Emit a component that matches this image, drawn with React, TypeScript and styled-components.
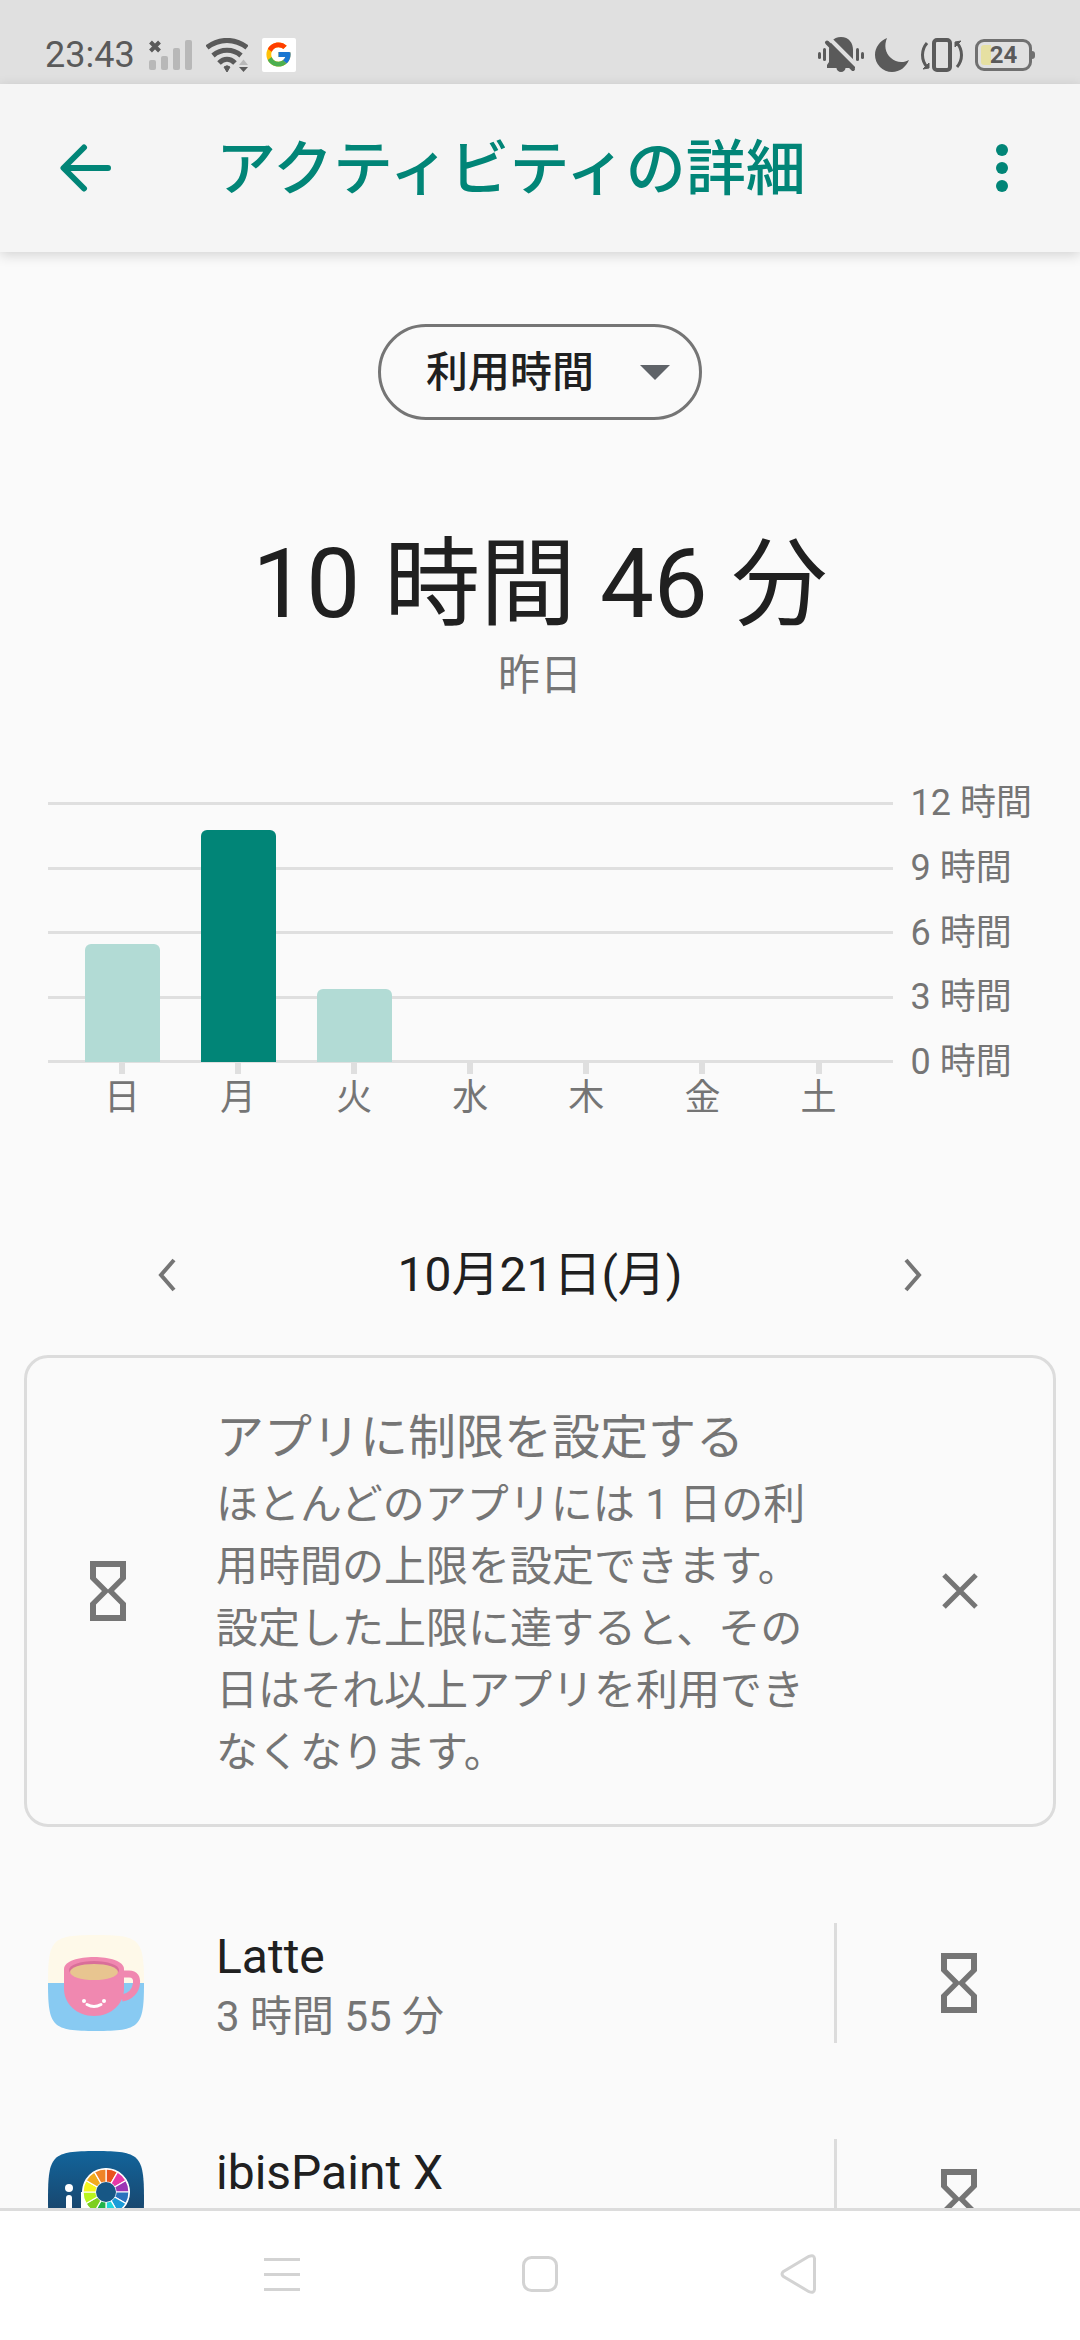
import React from 'react';
import styled, { createGlobalStyle } from 'styled-components';
import { FcGoogle } from 'react-icons/fc';

const color = {
  page: '#fafafa',
  header: '#f5f5f5',
  status: '#e0e0e0',
  statusIcon: '#5a5a5a',
  statusFaint: '#b8b8b8',
  teal: '#018577',
  tealLight: '#b2dbd5',
  text: '#202020',
  muted: '#757575',
  line: '#dfdfdf',
  navIcon: '#d3d3d3',
};

const GlobalStyle = createGlobalStyle`
  *, *::before, *::after { box-sizing: border-box; }
  body {
    margin: 0;
    background: ${color.page};
    color: ${color.text};
    font-family: Roboto, "Noto Sans CJK JP", sans-serif;
  }
  h1, h2, p, ul, ol, figure { margin: 0; padding: 0; }
  ul, ol { list-style: none; }
  svg { display: block; flex: none; }
`;

const Screen = styled.div`
  display: flex;
  flex-direction: column;
  height: 100vh;
`;

const StatusBar = styled.div`
  display: flex;
  flex: none;
  align-items: center;
  justify-content: space-between;
  height: 84px;
  padding: 25px 45px 0;
  background: ${color.status};
  color: ${color.statusIcon};
`;

const StatusGroup = styled.div<{ $gap: number }>`
  display: flex;
  align-items: center;
  gap: ${(p) => p.$gap}px;
`;

const Clock = styled.time`
  font-size: 36px;
  line-height: 36px;
`;

const GoogleTile = styled.span`
  display: grid;
  place-items: center;
  width: 34px;
  height: 34px;
  border-radius: 2px;
  background: #fff;
`;

const Battery = styled.span`
  display: flex;
  align-items: center;
`;

const BatteryBody = styled.span`
  display: grid;
  grid-template-columns: 10px 1fr;
  align-items: center;
  width: 57px;
  height: 32px;
  padding: 3px;
  border: 3px solid #707070;
  border-radius: 9px;
`;

const BatteryCharge = styled.span`
  grid-area: 1 / 1;
  height: 20px;
  border-radius: 3px 0 0 3px;
  background: #e6e0a2;
`;

const BatteryLevel = styled.span`
  grid-area: 1 / 1 / 2 / 3;
  font-size: 24px;
  font-weight: 700;
  line-height: 20px;
  text-align: center;
`;

const BatteryTip = styled.span`
  width: 3px;
  height: 8px;
  border-radius: 0 3px 3px 0;
  background: #707070;
`;

const Header = styled.header`
  position: relative;
  z-index: 1;
  display: grid;
  flex: none;
  grid-template-columns: 171px 1fr 156px;
  align-items: center;
  height: 168px;
  background: ${color.header};
  box-shadow: 0 3px 12px rgba(0, 0, 0, 0.16);
`;

const IconButton = styled.button`
  display: grid;
  place-items: center;
  min-width: 96px;
  min-height: 96px;
  padding: 0;
  border: 0;
  background: none;
  color: inherit;
  cursor: pointer;
`;

const Title = styled.h1`
  padding: 4px 0 0 45px;
  color: ${color.teal};
  font-size: 60px;
  font-weight: 500;
  line-height: 80px;
  white-space: nowrap;
`;

const Main = styled.main`
  flex: 1;
  min-height: 0;
  overflow-y: auto;
  scrollbar-width: none;
`;

const Picker = styled.div`
  display: grid;
  width: 324px;
  margin: 72px auto 0;
`;

const PickerSelect = styled.select`
  grid-area: 1 / 1;
  height: 96px;
  padding: 0 80px 0 45px;
  border: 3px solid ${color.muted};
  border-radius: 48px;
  appearance: none;
  background: transparent;
  color: ${color.text};
  font-family: inherit;
  font-size: 42px;
  font-weight: 500;
  cursor: pointer;
`;

const PickerArrow = styled.svg`
  grid-area: 1 / 1;
  place-self: center end;
  margin-right: 32px;
  pointer-events: none;
`;

const Summary = styled.section`
  margin-top: 108px;
  text-align: center;
`;

const Total = styled.h2`
  font-size: 96px;
  font-weight: 400;
  line-height: 112px;
`;

const TotalDay = styled.p`
  margin-top: 8px;
  color: ${color.muted};
  font-size: 42px;
  line-height: 56px;
`;

const Chart = styled.figure`
  display: grid;
  grid-template-columns: 1fr auto;
  column-gap: 18px;
  margin-top: 79px;
  padding: 0 48px;
  color: ${color.muted};
  font-size: 36px;
`;

const Plot = styled.div`
  display: grid;
  height: 261px;
  margin-top: 19px;
`;

const GridLines = styled.div`
  display: flex;
  grid-area: 1 / 1;
  flex-direction: column;
  justify-content: space-between;
`;

const GridLine = styled.span`
  height: 3px;
  background: ${color.line};
`;

const Bars = styled.div`
  display: grid;
  grid-area: 1 / 1;
  grid-template-columns: repeat(7, 1fr);
  align-items: end;
  justify-items: center;
  padding: 2px 16px 1px;
`;

const Bar = styled.span<{ $selected: boolean }>`
  width: 75px;
  border-radius: 6px 6px 0 0;
  background: ${(p) => (p.$selected ? color.teal : color.tealLight)};
`;

const ScaleLabels = styled.div`
  display: flex;
  grid-row: span 2;
  flex-direction: column;
  justify-content: space-between;
  height: 299px;
  line-height: 40px;
  white-space: nowrap;
`;

const Days = styled.ol`
  display: grid;
  grid-template-columns: repeat(7, 1fr);
  padding: 0 16px;
`;

const Day = styled.li`
  display: flex;
  flex-direction: column;
  align-items: center;
  line-height: 48px;

  &::before {
    width: 6px;
    height: 11px;
    background: ${color.line};
    content: '';
  }
`;

const DateNav = styled.nav`
  display: flex;
  align-items: center;
  justify-content: space-between;
  margin-top: 105px;
  padding: 0 119px;
  color: ${color.muted};
`;

const CurrentDate = styled.p`
  color: ${color.text};
  font-size: 48px;
  line-height: 64px;
`;

const TipCard = styled.section`
  display: grid;
  grid-template-columns: 162px 1fr 186px;
  column-gap: 27px;
  align-items: center;
  margin: 32px 24px 0;
  border: 3px solid #dcdcdc;
  border-radius: 24px;
  color: ${color.muted};
`;

const TipIcon = styled.span`
  display: grid;
  place-items: center;
`;

const TipText = styled.div`
  padding: 48px 0 40px;
`;

const TipTitle = styled.h2`
  font-size: 48px;
  font-weight: 400;
  line-height: 64px;
`;

const TipBody = styled.p`
  margin-top: 4px;
  font-size: 42px;
  line-height: 62px;
`;

const AppList = styled.ul`
  margin-top: 48px;
`;

const AppRow = styled.li`
  display: grid;
  grid-template-columns: 96px 1fr 246px;
  align-items: center;
  height: 216px;
  padding-left: 48px;
`;

const AppText = styled.div`
  display: grid;
  row-gap: 12px;
  padding-left: 72px;
`;

const AppName = styled.p`
  font-size: 48px;
  line-height: 56px;
`;

const AppTime = styled.p`
  color: ${color.muted};
  font-size: 42px;
  line-height: 40px;
`;

const LimitButton = styled(IconButton)`
  height: 120px;
  border-left: 3px solid #dcdcdc;
  color: ${color.muted};
`;

const SystemNav = styled.nav`
  display: grid;
  flex: none;
  grid-template-columns: repeat(3, 1fr);
  align-items: center;
  height: 132px;
  padding: 0 153px 3px;
  border-top: 3px solid #dcdcdc;
  background: #fff;
  color: ${color.navIcon};
`;

const SignalIcon = () => (
  <svg width="43" height="30" viewBox="0 0 43 30" aria-hidden="true">
    <g fill={color.statusFaint}>
      <rect x="0" y="20" width="7" height="10" rx="2" />
      <rect x="12" y="16" width="7" height="14" rx="2" />
      <rect x="24" y="8" width="7" height="22" rx="2" />
      <rect x="36" y="0" width="7" height="30" rx="2" />
    </g>
    <path d="M1.500 2l9 9M10.500 2l-9 9" stroke="currentColor" strokeWidth="4" />
  </svg>
);

const WifiIcon = () => (
  <svg width="42" height="34" viewBox="0 0 42 34" fill="none" aria-hidden="true">
    <g stroke="currentColor" strokeWidth="5">
      <path d="M1 9.500C13 0 29 0 41 9.500" />
      <path d="M7 17.500C15 10.500 27 10.500 35 17.500" />
      <path d="M13 25C18 20 24 20 29 25" />
    </g>
    <path d="M18 29q3-2.500 6 0l-3 5z" fill="currentColor" stroke="currentColor" strokeLinejoin="round" />
    <path d="M33 27l4.500-5.500L42 27z" fill={color.statusFaint} />
    <path d="M33 29l4.500 5L42 29z" fill="currentColor" />
  </svg>
);

const SilentIcon = () => (
  <svg width="46" height="35" viewBox="0 0 46 35" fill="currentColor" aria-hidden="true">
    <rect x="0" y="15" width="3" height="7" rx="1.500" />
    <rect x="5" y="11" width="3" height="13" rx="1.500" />
    <rect x="38" y="11" width="3" height="13" rx="1.500" />
    <rect x="43" y="15" width="3" height="7" rx="1.500" />
    <path d="M23 0C31 0 35 6 35 13v9l2 6v3H27.500a4.500 4 0 0 1-9 0H9v-3l2-3V13C11 6 15 0 23 0z" />
    <path d="M10 0L40 30" stroke={color.status} strokeWidth="4" />
    <path d="M9 5.500L35 32" stroke="currentColor" strokeWidth="4" strokeLinecap="round" />
  </svg>
);

const MoonIcon = () => (
  <svg width="34" height="34" viewBox="0 0 34 34" fill="currentColor" aria-hidden="true">
    <path d="M12 0C5 3 0 9 0 17a17 17 0 0 0 17 17c8 0 14-5 17-12-5 3-13 3-18-2C10 15 9 7 12 0z" />
  </svg>
);

const VibrateIcon = () => (
  <svg width="44" height="34" viewBox="0 0 44 34" fill="none" stroke="currentColor" aria-hidden="true">
    <rect x="14" y="2" width="16" height="30" rx="3" strokeWidth="4" />
    <path d="M7 5C1 12 1 22 7 29M37 29c6-7 6-17 0-24" strokeWidth="3" />
    <path d="M3 31l6-1V25zM41 3l-6 1v5z" fill="currentColor" strokeWidth="1" />
  </svg>
);

const BackArrow = () => (
  <svg width="51" height="48" viewBox="0 0 51 48" fill="none" stroke={color.teal} strokeWidth="6" strokeLinecap="round" strokeLinejoin="round" aria-hidden="true">
    <path d="M24 3.500L3.500 24 24 44.500M4 24h44" />
  </svg>
);

const MoreDots = () => (
  <svg width="12" height="48" viewBox="0 0 12 48" fill={color.teal} aria-hidden="true">
    <circle cx="6" cy="6" r="6" />
    <circle cx="6" cy="24" r="6" />
    <circle cx="6" cy="42" r="6" />
  </svg>
);

const Chevron = ({ d }: { d: string }) => (
  <svg width="18" height="34" viewBox="0 0 18 34" fill="none" stroke="currentColor" strokeWidth="4" aria-hidden="true">
    <path d={d} />
  </svg>
);

const Hourglass = () => (
  <svg width="36" height="60" viewBox="0 0 36 60" fill="currentColor" aria-hidden="true">
    <path fillRule="evenodd" d="M0 0h36v18L24 30l12 12v18H0V42l12-12L0 18zM6 6v10.500l12 12 12-12V6zM18 31.500l-12 12V54h24V43.500z" />
  </svg>
);

const CloseIcon = () => (
  <svg width="36" height="36" viewBox="0 0 36 36" stroke="currentColor" strokeWidth="5" aria-hidden="true">
    <path d="M2 2l32 32M34 2L2 34" />
  </svg>
);

const squircle = 'M0 48C0 4 4 0 48 0s48 4 48 48-4 48-48 48S0 92 0 48z';

const LatteIcon = () => (
  <svg width="96" height="96" viewBox="0 0 96 96" aria-hidden="true">
    <clipPath id="latte-tile"><path d={squircle} /></clipPath>
    <g clipPath="url(#latte-tile)">
      <path fill="#fef9e9" d="M0 0h96v48H0z" />
      <path fill="#88caf2" d="M0 48h96v48H0z" />
    </g>
    <path d="M74 39h7c6 0 8 4 7.500 9-.5 8-6.500 14-14.500 15" fill="none" stroke="#f088b0" strokeWidth="7" />
    <path fill="#f088b0" d="M16 34c0-16 60-16 60 0v20c0 14-12 27-30 27S16 68 16 54z" />
    <ellipse cx="46" cy="35" rx="25" ry="9" fill="#d96f99" />
    <ellipse cx="46" cy="37" rx="24" ry="8" fill="#e8c590" />
    <g fill="#fff">
      <circle cx="36" cy="66" r="2" />
      <circle cx="56" cy="66" r="2" />
    </g>
    <path d="M39 69.500q7 4 14 0" fill="none" stroke="#fff" strokeWidth="3" strokeLinecap="round" />
  </svg>
);

const wheelColors = [
  '#e8541e', '#e637a8', '#9c35b5', '#2a72bd', '#1b9bd8', '#22d6dc',
  '#22b24a', '#7ccf1e', '#b9f51d', '#f6f61e', '#f2ab1e', '#ef8427',
];

const wedge = (index: number) => {
  const at = (step: number, r: number) => {
    const angle = (step * Math.PI) / 6;
    return `${58 + r * Math.sin(angle)} ${41 - r * Math.cos(angle)}`;
  };
  return `M${at(index, 10)}L${at(index, 23)}A23 23 0 0 1 ${at(index + 1, 23)}L${at(index + 1, 10)}A10 10 0 0 0 ${at(index, 10)}z`;
};

const IbisPaintIcon = () => (
  <svg width="96" height="96" viewBox="0 0 96 96" aria-hidden="true">
    <linearGradient id="ibis-tile" x1="0" y1="0" x2="0" y2="1">
      <stop offset="0" stopColor="#12649b" />
      <stop offset="1" stopColor="#1d3552" />
    </linearGradient>
    <path d={squircle} fill="url(#ibis-tile)" />
    <g fill="#fff">
      <circle cx="21" cy="37" r="4" />
      <rect x="18" y="44" width="6" height="31" rx="3" />
      <path d="M33 41h8v44h-8z" />
      <circle cx="58" cy="41" r="24" />
    </g>
    {wheelColors.map((fill, i) => (
      <path key={fill} d={wedge(i)} fill={fill} stroke="#fff" strokeWidth="1.2" />
    ))}
    <circle cx="58" cy="41" r="10" fill="#175785" />
  </svg>
);

const RecentsIcon = () => (
  <svg width="36" height="33" viewBox="0 0 36 33" fill="currentColor" aria-hidden="true">
    <path d="M0 0h36v3H0zM0 15h36v3H0zM0 30h36v3H0z" />
  </svg>
);

const HomeIcon = () => (
  <svg width="36" height="36" viewBox="0 0 36 36" fill="none" stroke="currentColor" strokeWidth="3" aria-hidden="true">
    <rect x="1.5" y="1.500" width="33" height="33" rx="8" />
  </svg>
);

const BackTriangle = () => (
  <svg width="36" height="40" viewBox="0 0 36 40" fill="none" stroke="currentColor" strokeWidth="3" aria-hidden="true">
    <path d="M29 2.300L3.500 17.500q-3 2.500 0 5L29 37.700q5 2 5.500-2.200v-31Q34 .3 29 2.300z" />
  </svg>
);

const week = [
  { day: '日', hours: 5.5 },
  { day: '月', hours: 10.77 },
  { day: '火', hours: 3.4 },
  { day: '水', hours: 0 },
  { day: '木', hours: 0 },
  { day: '金', hours: 0 },
  { day: '土', hours: 0 },
];
const selectedDay = '月';
const maxHours = 12;
const scale = [12, 9, 6, 3, 0];

const apps = [
  { name: 'Latte', time: '3 時間 55 分', icon: <LatteIcon /> },
  { name: 'ibisPaint X', time: '', icon: <IbisPaintIcon /> },
];

export default function App() {
  return (
    <Screen lang="ja">
      <GlobalStyle />
      <StatusBar>
        <StatusGroup $gap={14}>
          <Clock>23:43</Clock>
          <SignalIcon />
          <WifiIcon />
          <GoogleTile><FcGoogle size={29} /></GoogleTile>
        </StatusGroup>
        <StatusGroup $gap={11}>
          <SilentIcon />
          <MoonIcon />
          <VibrateIcon />
          <Battery>
            <BatteryBody>
              <BatteryCharge />
              <BatteryLevel>24</BatteryLevel>
            </BatteryBody>
            <BatteryTip />
          </Battery>
        </StatusGroup>
      </StatusBar>

      <Header>
        <IconButton type="button" aria-label="戻る"><BackArrow /></IconButton>
        <Title>アクティビティの詳細</Title>
        <IconButton type="button" aria-label="その他"><MoreDots /></IconButton>
      </Header>

      <Main>
        <Picker>
          <PickerSelect aria-label="表示する項目" defaultValue="time">
            <option value="time">利用時間</option>
          </PickerSelect>
          <PickerArrow width="30" height="15" viewBox="0 0 30 15" fill="#5f6368" aria-hidden="true">
            <path d="M0 0h30L15 15z" />
          </PickerArrow>
        </Picker>

        <Summary>
          <Total>10 時間 46 分</Total>
          <TotalDay>昨日</TotalDay>
        </Summary>

        <Chart>
          <Plot>
            <GridLines>
              {scale.map((h) => <GridLine key={h} />)}
            </GridLines>
            <Bars>
              {week.map(({ day, hours }) => (
                <Bar
                  key={day}
                  $selected={day === selectedDay}
                  style={{ height: `${(hours / maxHours) * 100}%` }}
                />
              ))}
            </Bars>
          </Plot>
          <ScaleLabels>
            {scale.map((h) => <span key={h}>{h} 時間</span>)}
          </ScaleLabels>
          <Days>
            {week.map(({ day }) => <Day key={day}>{day}</Day>)}
          </Days>
        </Chart>

        <DateNav>
          <IconButton type="button" aria-label="前の日"><Chevron d="M16 2L3 17l13 15" /></IconButton>
          <CurrentDate>10月21日(月)</CurrentDate>
          <IconButton type="button" aria-label="次の日"><Chevron d="M2 2l13 15L2 32" /></IconButton>
        </DateNav>

        <TipCard>
          <TipIcon><Hourglass /></TipIcon>
          <TipText>
            <TipTitle>アプリに制限を設定する</TipTitle>
            <TipBody>
              ほとんどのアプリには 1 日の利用時間の上限を設定できます。設定した上限に達すると、その日はそれ以上アプリを利用できなくなります。
            </TipBody>
          </TipText>
          <IconButton type="button" aria-label="閉じる"><CloseIcon /></IconButton>
        </TipCard>

        <AppList>
          {apps.map((app) => (
            <AppRow key={app.name}>
              {app.icon}
              <AppText>
                <AppName>{app.name}</AppName>
                <AppTime>{app.time || '\u00a0'}</AppTime>
              </AppText>
              <LimitButton type="button" aria-label={`${app.name} の制限`}><Hourglass /></LimitButton>
            </AppRow>
          ))}
        </AppList>
      </Main>

      <SystemNav>
        <IconButton type="button" aria-label="アプリ履歴"><RecentsIcon /></IconButton>
        <IconButton type="button" aria-label="ホーム"><HomeIcon /></IconButton>
        <IconButton type="button" aria-label="戻る"><BackTriangle /></IconButton>
      </SystemNav>
    </Screen>
  );
}
